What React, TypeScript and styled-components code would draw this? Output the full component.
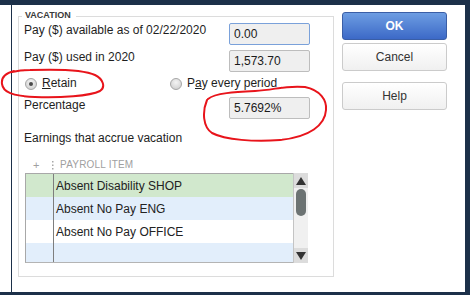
import { FC } from "react";
import styled, { createGlobalStyle } from "styled-components";

const navy = "#1c3049";

const GlobalStyle = createGlobalStyle`
  html, body { margin: 0; padding: 0; background: #fff; }
  body { font-family: "Liberation Sans", Arial, sans-serif; font-size: 12px; color: #1e1e1e; }
  * { box-sizing: border-box; }
`;

const Page = styled.div`
  position: relative;
  width: 470px;
  height: 295px;
`;

const Frame = styled.div`
  width: 100%;
  height: 100%;
  display: flex;
  background: #fff;
  border-top: 5px solid ${navy};
  border-right: 5px solid ${navy};
  border-bottom: 3px solid ${navy};
  padding-left: 11px;
`;

const Window = styled.div`
  flex: 1;
  display: flex;
  align-items: flex-start;
  padding-top: 5px;
  border-left: 1px solid ${navy};
`;

const Group = styled.fieldset`
  margin: 0 0 0 6px;
  padding: 0 5px;
  width: 316px;
  height: 267px;
  min-width: 0;
  border: 1px solid #dcdcdc;
`;

const Legend = styled.legend`
  margin-left: -2px;
  padding: 0 5px 3px 3px;
  font-size: 9px;
  line-height: 10px;
  font-weight: bold;
  color: #3a3a3a;
`;

const FieldRow = styled.div<{ $top: number }>`
  display: grid;
  grid-template-columns: 205px 81px;
  align-items: start;
  margin-top: ${(p) => p.$top}px;
`;

const Label = styled.div<{ $top?: number }>`
  line-height: 15px;
  font-size: 12px;
  margin-top: ${(p) => p.$top ?? 0}px;
`;

const Field = styled.input<{ $focused?: boolean }>`
  width: 81px;
  height: 22px;
  padding: 0 4px;
  margin: 0;
  background: #efefef;
  border: 1px solid ${(p) => (p.$focused ? "#7aa1da" : "#bdbdbd")};
  border-radius: 2px;
  font-family: inherit;
  font-size: 12px;
  color: #1a1a1a;
  outline: none;
`;

const RadioRow = styled.div`
  display: flex;
  height: 15px;
  margin-top: 4px;
  padding-left: 1px;
`;

const RadioOption = styled.label<{ $width?: number }>`
  display: flex;
  align-items: center;
  gap: 5px;
  width: ${(p) => (p.$width ? `${p.$width}px` : "auto")};
  line-height: 15px;
  font-size: 12px;
`;

const RadioDot = styled.span<{ $checked?: boolean }>`
  width: 12px;
  height: 12px;
  border-radius: 50%;
  border: 1px solid #a5a5a5;
  background: radial-gradient(circle at 50% 35%, #f4f4f4, #cacaca);
  display: flex;
  align-items: center;
  justify-content: center;

  &::after {
    content: "";
    display: ${(p) => (p.$checked ? "block" : "none")};
    width: 4px;
    height: 4px;
    border-radius: 50%;
    background: #4a4a4a;
  }
`;

const Key = styled.span`
  text-decoration: underline;
`;

const HeaderRow = styled.div`
  display: flex;
  align-items: center;
  height: 12px;
  margin-top: 13px;
  padding-left: 9px;
  font-size: 10px;
  letter-spacing: 0.2px;
  color: #a0a0a0;
  line-height: 12px;
`;

const HeaderPlus = styled.span`
  width: 19px;
  font-size: 11px;
`;

const HeaderGrip = styled.span`
  width: 8px;
  display: flex;
`;

const Table = styled.div`
  display: flex;
  width: 283px;
  height: 90px;
  margin: 2px 0 0 1px;
`;

const TableBody = styled.div`
  flex: 1;
  overflow: hidden;
  border-top: 1px solid #a8a8a8;
  border-left: 1px solid #a8a8a8;
  border-bottom: 1px solid #b4b4b4;
`;

const Row = styled.div<{ $bg: string }>`
  display: flex;
  height: 23px;
  background: ${(p) => p.$bg};
`;

const MarkCell = styled.div`
  width: 28px;
  border-right: 1px solid #7e7e7e;
`;

const NameCell = styled.div`
  flex: 1;
  display: flex;
  align-items: center;
  padding-left: 2px;
  font-size: 12px;
  color: #222;
`;

const Scrollbar = styled.div`
  width: 15px;
  display: flex;
  flex-direction: column;
  border-left: 1px solid #c4c4c4;
  background: #f0f0f0;
`;

const ScrollArrow = styled.div`
  height: 15px;
  background: #dcdcdc;
  display: flex;
  align-items: center;
  justify-content: center;
`;

const ScrollTrack = styled.div`
  flex: 1;
  display: flex;
  justify-content: center;
  padding-top: 1px;
`;

const ScrollThumb = styled.div`
  width: 10px;
  height: 27px;
  border-radius: 5px;
  background: #6c7373;
`;

const Buttons = styled.div`
  display: flex;
  flex-direction: column;
  width: 105px;
  margin: 2px 0 0 8px;
`;

const Button = styled.button<{ $primary?: boolean; $gap?: number }>`
  height: 28px;
  margin-top: ${(p) => p.$gap ?? 0}px;
  padding: 0;
  border-radius: 3px;
  font-family: inherit;
  font-size: 12px;
  font-weight: ${(p) => (p.$primary ? "bold" : "normal")};
  color: ${(p) => (p.$primary ? "#fff" : "#333")};
  border: 1px solid ${(p) => (p.$primary ? "#3a5ea6" : "#cbcbcb")};
  background: ${(p) =>
    p.$primary
      ? "linear-gradient(#6d9de2, #3c69c7)"
      : "linear-gradient(#ffffff, #f0f0f0)"};
`;

const Annotations = styled.svg`
  position: absolute;
  inset: 0;
  pointer-events: none;
`;

const rows = [
  { name: "Absent Disability SHOP", bg: "#d1e8cd" },
  { name: "Absent No Pay ENG", bg: "#e2eefb" },
  { name: "Absent No Pay OFFICE", bg: "#ffffff" },
  { name: "", bg: "#e2eefb" },
];

const Triangle: FC<{ down?: boolean }> = ({ down }) => (
  <svg width="10" height="8" viewBox="0 0 10 8">
    <polygon points={down ? "0,0 10,0 5,8" : "5,0 10,8 0,8"} fill="#333" />
  </svg>
);

export default function App() {
  return (
    <Page>
      <GlobalStyle />
      <Frame>
        <Window>
          <Group>
            <Legend>VACATION</Legend>
            <FieldRow $top={0}>
              <Label>Pay ($) available as of 02/22/2020</Label>
              <Field $focused readOnly value="0.00" />
            </FieldRow>
            <FieldRow $top={5}>
              <Label>Pay ($) used in 2020</Label>
              <Field readOnly value="1,573.70" />
            </FieldRow>
            <RadioRow>
              <RadioOption $width={145}>
                <RadioDot $checked />
                <span>
                  <Key>R</Key>etain
                </span>
              </RadioOption>
              <RadioOption>
                <RadioDot />
                <span>
                  P<Key>a</Key>y every period
                </span>
              </RadioOption>
            </RadioRow>
            <FieldRow $top={6}>
              <Label $top={1}>Percentage</Label>
              <Field readOnly value="5.7692%" />
            </FieldRow>
            <Label $top={12}>Earnings that accrue vacation</Label>
            <HeaderRow>
              <HeaderPlus>+</HeaderPlus>
              <HeaderGrip>
                <svg width="2" height="9" viewBox="0 0 2 9">
                  <rect x="0" y="0" width="1.5" height="1.5" fill="#a8a8a8" />
                  <rect x="0" y="3.5" width="1.5" height="1.5" fill="#a8a8a8" />
                  <rect x="0" y="7" width="1.5" height="1.5" fill="#a8a8a8" />
                </svg>
              </HeaderGrip>
              <span>PAYROLL ITEM</span>
            </HeaderRow>
            <Table>
              <TableBody>
                {rows.map((r, i) => (
                  <Row key={i} $bg={r.bg}>
                    <MarkCell />
                    <NameCell>{r.name}</NameCell>
                  </Row>
                ))}
              </TableBody>
              <Scrollbar>
                <ScrollArrow>
                  <Triangle />
                </ScrollArrow>
                <ScrollTrack>
                  <ScrollThumb />
                </ScrollTrack>
                <ScrollArrow>
                  <Triangle down />
                </ScrollArrow>
              </Scrollbar>
            </Table>
          </Group>
          <Buttons>
            <Button $primary>OK</Button>
            <Button $gap={3}>Cancel</Button>
            <Button $gap={11}>Help</Button>
          </Buttons>
        </Window>
      </Frame>
      <Annotations width="470" height="295" viewBox="0 0 470 295">
        <path
          d="M 14 71 C 6 73, 1 77, 2 84 C 3 92, 12 96, 35 97 C 60 98, 90 96, 100 91 C 106 87, 103 79, 95 75 C 85 70, 60 69, 30 70 C 22 70, 16 71, 12 72"
          fill="none"
          stroke="#e8141b"
          strokeWidth="2"
          strokeLinecap="round"
        />
        <path
          d="M 208 99 C 215 93, 235 92, 255 91 C 275 90, 285 85, 305 87 C 320 90, 327 100, 326 110 C 325 125, 310 137, 280 140 C 255 142, 225 140, 212 133 C 203 127, 202 112, 207 100"
          fill="none"
          stroke="#e8141b"
          strokeWidth="2"
          strokeLinecap="round"
        />
      </Annotations>
    </Page>
  );
}
